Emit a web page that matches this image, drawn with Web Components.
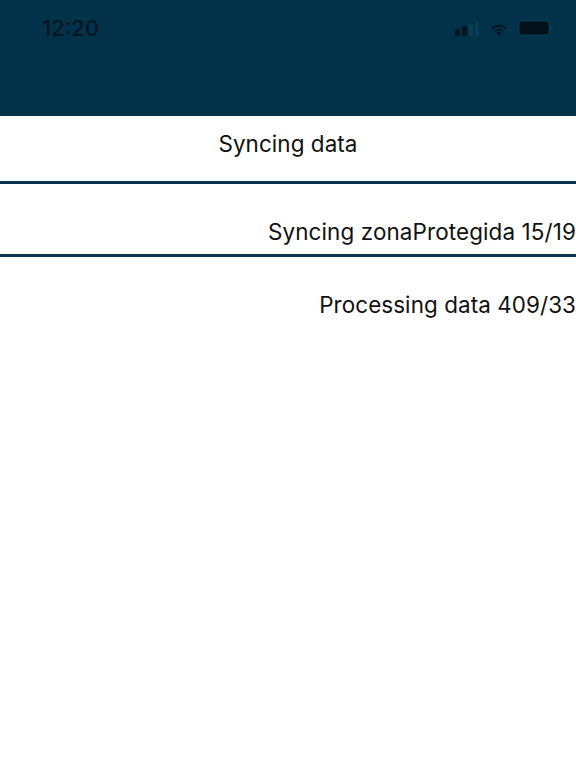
<!DOCTYPE html>
<html>
<head>
<meta charset="utf-8">
<title>Sync</title>
<style>
  html, body { margin: 0; padding: 0; background: #fff; }
  body { width: 576px; height: 768px; overflow: hidden; font-family: Inter, "Liberation Sans", sans-serif; }
</style>
</head>
<body>
<sync-screen>
  <status-header time="12:20"></status-header>
  <sync-row align="center" height="65" pad="14">Syncing data</sync-row>
  <sync-row align="end" height="70" pad="34" spacing="0.11">Syncing zonaProtegida 15/19</sync-row>
  <sync-row align="end" height="70" pad="34" last>Processing data 409/33</sync-row>
</sync-screen>
<script>
class SyncScreen extends HTMLElement {
  constructor() {
    super()
    this.attachShadow({ mode: "open" })
    this.shadowRoot.innerHTML = `
      <style>
        :host { display: flex; flex-direction: column; width: 576px; height: 768px; background: #fff; }
      </style>
      <slot></slot>
    `
  }
}

class StatusHeader extends HTMLElement {
  constructor() {
    super()
    this.attachShadow({ mode: "open" })
  }

  connectedCallback() {
    this.shadowRoot.innerHTML = `
      <style>
        :host { display: block; height: 116px; background: #01324a; color: #03151f; }
        .bar { display: flex; align-items: center; justify-content: space-between; height: 24px; padding: 16px 22px 0 42px; }
        .time { font-size: 22px; font-weight: 500; line-height: 24px; }
        .icons { display: flex; align-items: flex-end; height: 16px; }
        .wifi { margin-left: 12px; }
        .battery { margin-left: 11px; }
        svg { display: block; }
      </style>
      <div class="bar">
        <span class="time">${this.getAttribute("time")}</span>
        <div class="icons">
          <svg width="24" height="14" viewBox="0 0 24 14">
            <rect x="0" y="7" width="5" height="7" rx="1" fill="#03151f"/>
            <rect x="7" y="4" width="5" height="10" rx="1" fill="#03151f"/>
            <rect x="14" y="2" width="4" height="12" rx="1" fill="#0a3c54"/>
            <rect x="20" y="0" width="4" height="14" rx="1" fill="#0a3c54"/>
          </svg>
          <svg class="wifi" width="16" height="12" viewBox="0 0 16 12">
            <path d="M8 11.5 5.6 9a3.4 3.4 0 0 1 4.8 0z" fill="#03151f"/>
            <path d="M1.2 4.4a9.8 9.8 0 0 1 13.6 0" fill="none" stroke="#03151f" stroke-width="2.2"/>
            <path d="M4 7.2a5.8 5.8 0 0 1 8 0" fill="none" stroke="#03151f" stroke-width="1.8"/>
          </svg>
          <svg class="battery" width="36" height="16" viewBox="0 0 36 16">
            <rect x="0.5" y="0.5" width="31" height="15" rx="3.5" fill="none" stroke="#0a3c54"/>
            <rect x="1.5" y="1.5" width="29" height="13" rx="2.5" fill="#02101a"/>
            <path d="M33 5.5c1.2.3 2 1.3 2 2.5s-.8 2.2-2 2.5z" fill="#0a3c54"/>
          </svg>
        </div>
      </div>
    `
  }
}

class SyncRow extends HTMLElement {
  constructor() {
    super()
    this.attachShadow({ mode: "open" })
  }

  connectedCallback() {
    const align = this.getAttribute("align") || "center"
    const height = this.getAttribute("height") || 66
    const pad = this.getAttribute("pad") || 0
    const spacing = this.getAttribute("spacing") || 0.07
    const border = this.hasAttribute("last") ? "none" : "3px solid #0b3550"
    this.shadowRoot.innerHTML = `
      <style>
        :host { display: flex; align-items: flex-start; justify-content: ${align === "end" ? "flex-end" : "center"};
          height: ${height - pad}px; padding-top: ${pad}px; border-bottom: ${border}; color: #111;
          font-size: 22.45px; line-height: 28px; letter-spacing: ${spacing}px; white-space: nowrap; }
      </style>
      <slot></slot>
    `
  }
}

customElements.define("sync-screen", SyncScreen)
customElements.define("status-header", StatusHeader)
customElements.define("sync-row", SyncRow)
</script>
</body>
</html>
